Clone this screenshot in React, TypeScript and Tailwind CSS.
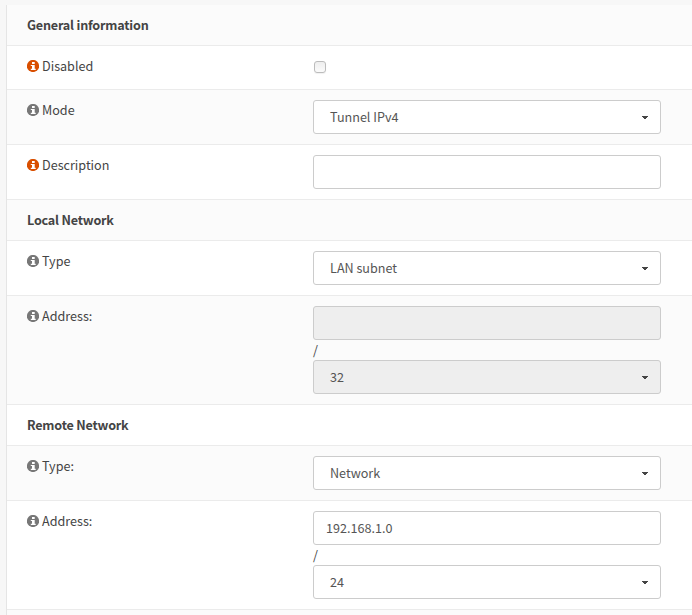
import type { ReactNode } from "react";

function InfoIcon({ accent = false }: { accent?: boolean }) {
  return (
    <svg
      viewBox="0 0 12 12"
      className={`mt-1 h-3 w-3 shrink-0 ${accent ? "text-[#d94f00]" : "text-[#777777]"}`}
    >
      <circle cx="6" cy="6" r="6.1" fill="currentColor" />
      <path fill="#ffffff" d="M5 2h2.7v1.9H5zM3.8 4.9h3.9v3.9h1v1.3H3.8V8.8H5V6.1H3.8z" />
    </svg>
  );
}

function Heading({ children, striped = false }: { children: ReactNode; striped?: boolean }) {
  return (
    <div
      className={`h-[41px] border-b border-[#ebebeb] px-5 py-2.5 font-bold tracking-[-0.2px] text-[#444444] ${striped ? "bg-[#fbfbfb]" : "bg-white"}`}
    >
      {children}
    </div>
  );
}

interface RowProps {
  label: string;
  accent?: boolean;
  striped?: boolean;
  children: ReactNode;
}

function Row({ label, accent, striped = false, children }: RowProps) {
  return (
    <div className={`flex border-b border-[#ebebeb] py-2.5 pl-5 ${striped ? "bg-[#fbfbfb]" : "bg-white"}`}>
      <div className="flex w-[286px] shrink-0 gap-[3px]">
        <InfoIcon accent={accent} />
        <span>{label}</span>
      </div>
      <div className="w-[348px]">{children}</div>
    </div>
  );
}

function Select({ value, disabled = false }: { value: string; disabled?: boolean }) {
  return (
    <button
      type="button"
      disabled={disabled}
      className={`flex h-[34px] w-full items-center justify-between rounded-[3px] border border-[#cccccc] pr-3 pl-4 text-[#555555] ${disabled ? "bg-[#eeeeee]" : "bg-white"}`}
    >
      <span>{value}</span>
      <svg viewBox="0 0 6 3" className="h-[3px] w-1.5 text-[#444444]" fill="currentColor" shapeRendering="crispEdges">
        <path d="M0 0h6v1H5v1H4v1H2V2H1V1H0z" />
      </svg>
    </button>
  );
}

function Input({ value = "", disabled = false }: { value?: string; disabled?: boolean }) {
  return (
    <input
      type="text"
      readOnly
      disabled={disabled}
      value={value}
      className={`block h-[34px] w-full rounded-[3px] border border-[#cccccc] px-3 pb-0.5 text-[#555555] ${disabled ? "bg-[#eeeeee]" : "bg-white"}`}
    />
  );
}

export default function App() {
  return (
    <div className="h-[615px] overflow-hidden bg-[#f7f7f7] pt-[5px] pl-1.5 font-['Source_Sans_Pro','Noto_Sans_CJK_SC',sans-serif] text-[12.6px] leading-5 text-[#444444]">
      <div className="h-full border-l border-[#e5e5e5] bg-[#fbfbfb]">
        <Heading striped>General information</Heading>
        <Row label="Disabled" accent>
          <div className="h-[23px] pt-[5px] pl-px">
            <input
              type="checkbox"
              className="block h-3 w-3 appearance-none rounded-[3px] border border-[#bcbcbc] bg-linear-to-b from-[#eeeeee] to-[#fbfbfb] shadow-[0_1px_1px_rgba(0,0,0,0.06)]"
            />
          </div>
        </Row>
        <Row label="Mode" striped>
          <Select value="Tunnel IPv4" />
        </Row>
        <Row label="Description" accent>
          <Input />
        </Row>
        <Heading striped>Local Network</Heading>
        <Row label="Type">
          <Select value="LAN subnet" />
        </Row>
        <Row label="Address:" striped>
          <Input disabled />
          <div className="h-5">/</div>
          <Select value="32" disabled />
        </Row>
        <Heading>Remote Network</Heading>
        <Row label="Type:" striped>
          <Select value="Network" />
        </Row>
        <Row label="Address:">
          <Input value="192.168.1.0" />
          <div className="h-5">/</div>
          <Select value="24" />
        </Row>
      </div>
    </div>
  );
}
